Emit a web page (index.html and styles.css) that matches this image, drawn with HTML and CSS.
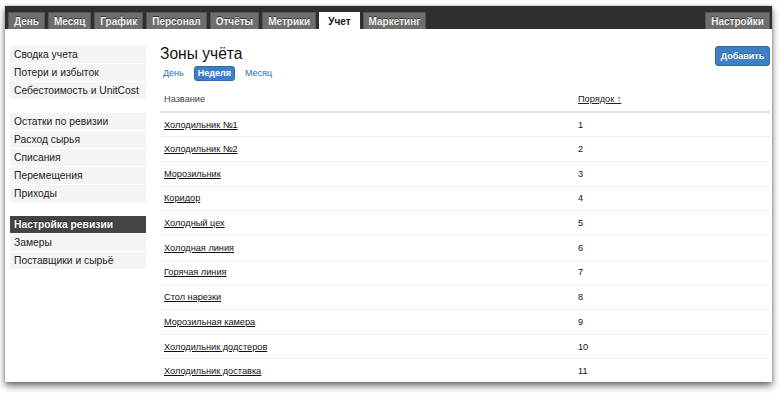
FILE: index.html
```html
<!DOCTYPE html>
<html lang="ru">
<head>
<meta charset="utf-8">
<title>Зоны учёта</title>
<link rel="stylesheet" href="styles.css">
</head>
<body>
<div class="window">
  <div class="topbar">
    <nav class="tabs">
      <a class="tab">День</a>
      <a class="tab">Месяц</a>
      <a class="tab">График</a>
      <a class="tab">Персонал</a>
      <a class="tab">Отчёты</a>
      <a class="tab">Метрики</a>
      <a class="tab active">Учет</a>
      <a class="tab">Маркетинг</a>
    </nav>
    <a class="tab">Настройки</a>
  </div>
  <div class="body">
    <aside class="sidebar">
      <ul class="group">
        <li>Сводка учета</li>
        <li>Потери и избыток</li>
        <li>Себестоимость и UnitCost</li>
      </ul>
      <ul class="group">
        <li>Остатки по ревизии</li>
        <li>Расход сырья</li>
        <li>Списания</li>
        <li>Перемещения</li>
        <li>Приходы</li>
      </ul>
      <ul class="group">
        <li class="active">Настройка ревизии</li>
        <li>Замеры</li>
        <li>Поставщики и сырьё</li>
      </ul>
    </aside>
    <main class="main">
      <div class="head">
        <div>
          <h1>Зоны учёта</h1>
          <div class="periods">
            <a class="period">День</a>
            <a class="period active">Неделя</a>
            <a class="period">Месяц</a>
          </div>
        </div>
        <button class="btn">Добавить</button>
      </div>
      <table class="zones">
        <thead>
          <tr><th class="c-name">Название</th><th class="c-order"><a>Порядок ↑</a></th></tr>
        </thead>
        <tbody>
          <tr><td><a>Холодильник №1</a></td><td>1</td></tr>
          <tr><td><a>Холодильник №2</a></td><td>2</td></tr>
          <tr><td><a>Морозильник</a></td><td>3</td></tr>
          <tr><td><a>Коридор</a></td><td>4</td></tr>
          <tr><td><a>Холодный цех</a></td><td>5</td></tr>
          <tr><td><a>Холодная линия</a></td><td>6</td></tr>
          <tr><td><a>Горячая линия</a></td><td>7</td></tr>
          <tr><td><a>Стол нарезки</a></td><td>8</td></tr>
          <tr><td><a>Морозильная камера</a></td><td>9</td></tr>
          <tr><td><a>Холодильник додстеров</a></td><td>10</td></tr>
          <tr><td><a>Холодильник доставка</a></td><td>11</td></tr>
        </tbody>
      </table>
    </main>
  </div>
</div>
</body>
</html>
```
FILE: styles.css
```css
* { box-sizing: border-box; }
html, body { margin: 0; padding: 0; background: #fff; }
body {
  font-family: "Liberation Sans", Arial, sans-serif;
  color: #222;
  overflow: hidden;
  height: 394px;
}
.window {
  margin: 6px 0 0 5px;
  width: 767px;
  height: 376px;
  background: #fff;
  box-shadow: 0 4px 7px rgba(0,0,0,0.55), 0 0 3px rgba(0,0,0,0.25);
  overflow: hidden;
}
.topbar {
  height: 23px;
  background: #2f2f2f;
  display: flex;
  justify-content: space-between;
  align-items: flex-end;
  padding: 0 2px 0 3px;
}
.tabs { display: flex; gap: 3px; }
.tab {
  display: block;
  height: 17px;
  line-height: 17px;
  padding: 0 5px;
  background: #6e6e6e;
  border: 1px solid #555;
  border-bottom: 0;
  color: #f4f4f4;
  font-size: 10px;
  font-weight: bold;
  text-shadow: 0 -1px 0 #333;
  white-space: nowrap;
}
.tab.active {
  background: #fff;
  color: #111;
  border-color: #fff;
  text-shadow: none;
  padding: 0 8px;
}
.body { display: flex; }
.sidebar {
  width: 136px;
  margin: 17px 0 0 5px;
  flex: none;
}
.group { list-style: none; margin: 0 0 13px; padding: 0; }
.group li {
  height: 18px;
  line-height: 17px;
  padding-left: 4px;
  font-size: 10.3px;
  color: #222;
  background: #f4f4f4;
  border-bottom: 1px solid #fff;
  white-space: nowrap;
}
.group li.active {
  background: #444;
  color: #fff;
  font-weight: bold;
  text-shadow: 0 -1px 0 #222;
}
.main { flex: 1; padding: 15px 2px 0 14px; }
.head { display: flex; justify-content: space-between; align-items: flex-start; }
h1 {
  margin: 0;
  font-size: 15.6px;
  font-weight: normal;
  line-height: 20px;
  color: #111;
}
.periods { display: flex; gap: 5px; margin: 2px 0 0 -2px; align-items: center; }
.period {
  font-size: 9px;
  line-height: 11px;
  color: #2a6db3;
  padding: 1px 4px;
  border: 1px solid transparent;
  border-radius: 3px;
}
.period.active {
  background: #3d7fc4;
  color: #fff;
  font-weight: bold;
  padding: 1px 3px;
  border-color: #2d6aa8;
}
.btn {
  font-family: inherit;
  font-size: 9px;
  font-weight: bold;
  color: #fff;
  background: #3e80c6;
  border: 1px solid #2e6aa9;
  border-radius: 3px;
  height: 20px;
  width: 55px;
  padding: 0;
  margin-top: 2px;
  text-shadow: 0 -1px 0 #2a5f99;
}
.zones {
  width: 100%;
  border-collapse: collapse;
  margin-top: 6px;
  font-size: 9.2px;
}
.zones th {
  text-align: left;
  font-weight: normal;
  color: #444;
  height: 25px;
  padding: 0 4px;
  border-bottom: 2px solid #e3e3e3;
}
.zones th a { color: #222; text-decoration: underline; }
.zones .c-name { width: 414px; }
.zones td {
  height: 24.7px;
  padding: 0 4px;
  color: #111;
  border-bottom: 1px solid #f0f0f0;
}
.zones td a { color: #111; text-decoration: underline; }
```
